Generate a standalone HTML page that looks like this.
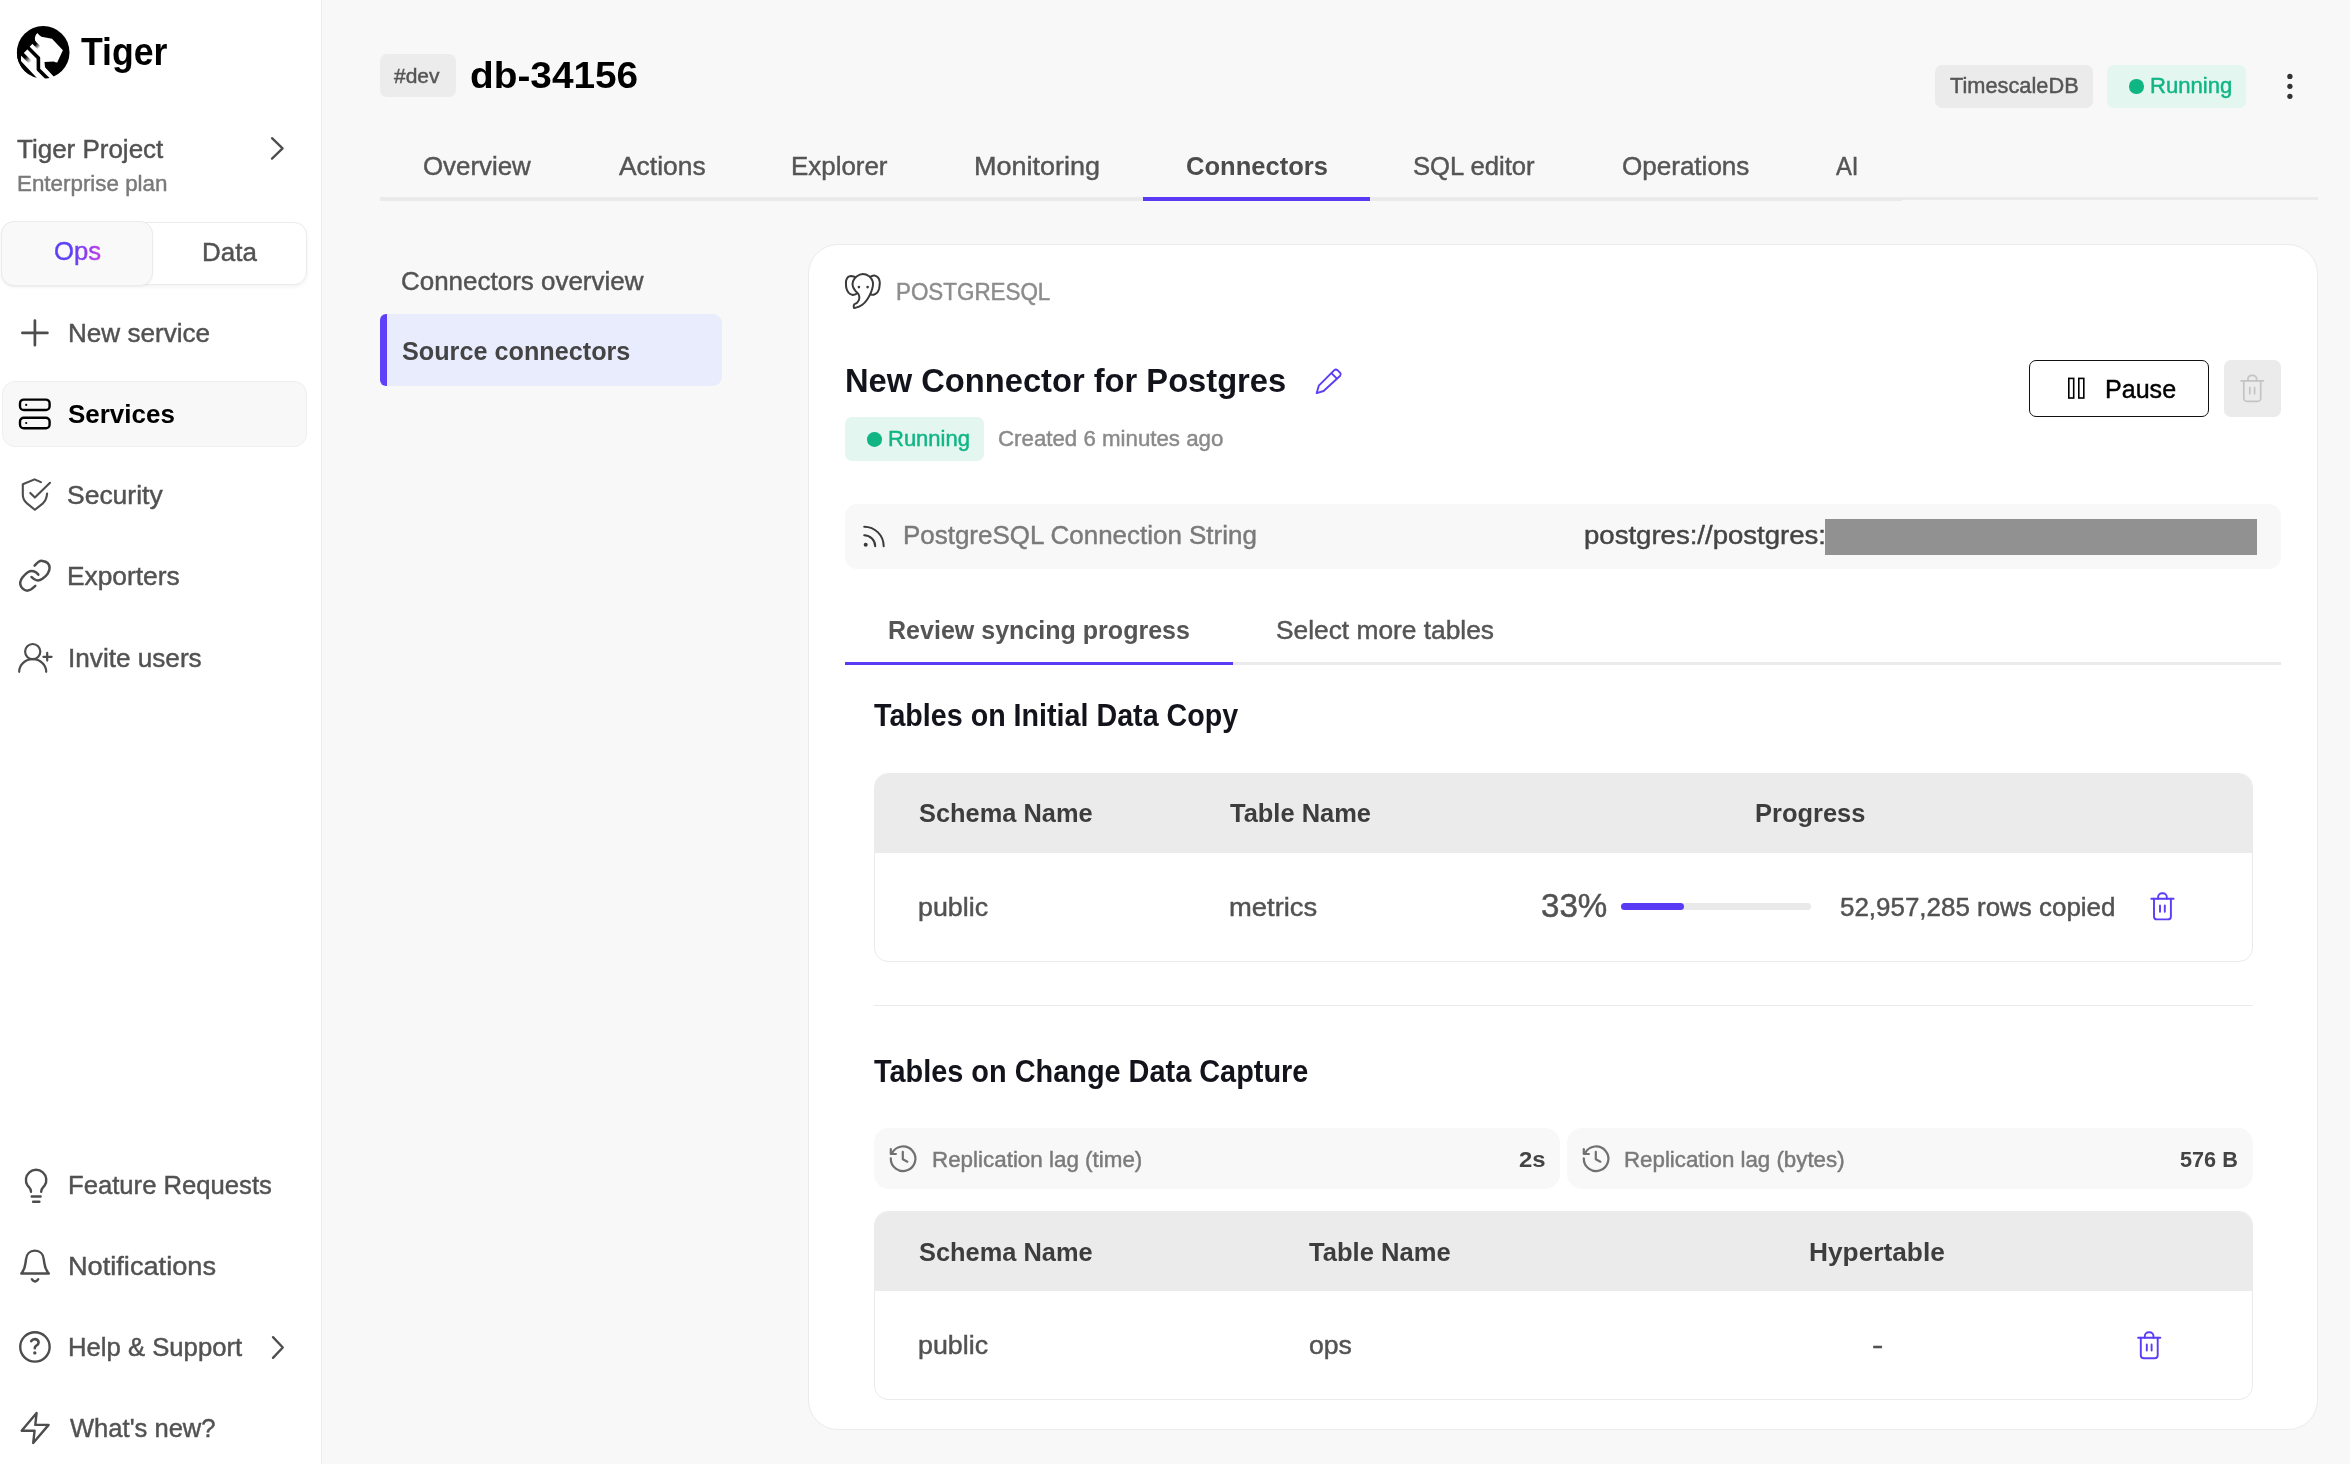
<!DOCTYPE html>
<html lang="en">
<head>
<meta charset="utf-8">
<title>db-34156 · Connectors · Tiger</title>
<style>
*{box-sizing:border-box;margin:0;padding:0}
html,body{width:2350px;height:1464px;overflow:hidden}
body{background:#f8f8f8;font-family:"Liberation Sans",sans-serif;position:relative;color:#4d4d4d}
.t{position:absolute;white-space:nowrap;display:block;font-style:normal;text-decoration:none;transform-origin:0 50%}
.b{position:absolute;display:block}
svg{position:absolute;overflow:visible}
.ic{fill:none;stroke-linecap:round;stroke-linejoin:round}
aside{position:absolute;left:0;top:0;width:322px;height:1464px;background:#fff;border-right:1px solid #ececec}
.toggle{left:2px;top:222px;width:305px;height:63px;border:1px solid #ebebeb;border-radius:13px;background:#fff;box-shadow:0 2px 4px rgba(0,0,0,.05)}
.toggle-on{left:1px;top:221px;width:152px;height:65px;border:1px solid #ebebeb;border-radius:13px;background:#f9f9f9;box-shadow:0 1px 2px rgba(0,0,0,.04)}
.nav-active{left:2px;top:381px;width:305px;height:66px;border:1px solid #efefef;border-radius:13px;background:#f8f8f8}
.chip{border-radius:7px}
.tabline{left:380px;top:197px;height:3px;width:1938px;background:#ebebeb}
.tabline2{left:380px;top:197px;height:4px;width:1522px;background:#eaeaea}
.tabsel{left:1143px;top:197px;height:4px;width:227px;background:#5b3af6}
.sn-active{left:380px;top:314px;width:342px;height:72px;background:#e8ecfd;border-radius:6px 9px 9px 6px;border-left:7px solid #6040f8}
.card{left:808px;top:244px;width:1510px;height:1186px;background:#fff;border:1px solid #ebebeb;border-radius:30px}
.btn{left:2029px;top:360px;width:180px;height:57px;border:1px solid #111;border-radius:7px;background:#fff}
.btn-dis{left:2224px;top:360px;width:57px;height:57px;border-radius:7px;background:#ebebeb}
.cs{left:845px;top:504px;width:1436px;height:65px;border-radius:12px;background:#f8f8f8}
.redact{left:1825px;top:519px;width:432px;height:36px;background:#919191}
.itline{left:845px;top:662px;width:1436px;height:3px;background:#ebebeb}
.itsel{left:845px;top:662px;width:388px;height:3px;background:#5b3af6}
.tbl{border:1px solid #ebebeb;border-radius:14px;background:#fff;overflow:hidden}
.tbl .hd{position:absolute;left:-1px;top:-1px;right:-1px;height:80px;background:#ebebeb}
.divider{left:874px;top:1005px;width:1379px;height:1px;background:#ebebeb}
.stat{height:61px;top:1128px;border-radius:15px;background:#f8f8f8}
.track{left:1621px;top:903px;width:190px;height:7px;border-radius:4px;background:#e9e9e9}
.fill{left:1621px;top:903px;width:63px;height:7px;border-radius:4px;background:#5b3af6}
</style>
</head>
<body>

<aside>
  <a class="brand">
    <svg style="left:0;top:0" width="90" height="90" viewBox="0 0 90 90">
      <defs>
        <linearGradient id="fa" gradientUnits="userSpaceOnUse" x1="22.5" y1="54.3" x2="30.5" y2="62.3"><stop offset="0.35" stop-color="#000"/><stop offset="1" stop-color="#000" stop-opacity="0"/></linearGradient>
        <linearGradient id="fb" gradientUnits="userSpaceOnUse" x1="34" y1="42.7" x2="39.3" y2="48"><stop offset="0.3" stop-color="#000"/><stop offset="1" stop-color="#000" stop-opacity="0"/></linearGradient>
        <clipPath id="cc"><circle cx="43.2" cy="52.4" r="26.3"/></clipPath>
      </defs>
      <circle cx="43.2" cy="52.4" r="26.3" fill="#000"/>
      <path fill="#fff" d="M37.3 32.9Q39.5 35.6 41.5 36.8L52 38.8L62.9 50.2L57.2 62.6Q55.5 62.3 53.7 61.5L44.5 62L45 67.2L56 79L34 82L20.9 61.1L21.1 55.8L24 52.8L26.8 50L30.1 46.2L32.5 43.8L35.8 41.9Q34.6 39.6 34.9 37.5Q35.5 34.5 37.3 32.900Z"/>
      <g clip-path="url(#cc)">
        <path fill="none" stroke="#000" stroke-width="3.6" stroke-linejoin="round" d="M24 43.6L38.4 58L38.4 69.4L50 81"/>
        <path fill="none" stroke="url(#fa)" stroke-width="3.9" d="M17 48.8L30.5 62.3"/>
        <path fill="none" stroke="url(#fb)" stroke-width="3.9" d="M30 38.7L39.3 48"/>
        <path fill="#000" d="M10 50L21 55.8L20.9 61.1L36.7 77.7L30 90L5 80Z"/>
      </g>
    </svg>
    <span class="t" id="logo" style="left:80.78px;top:28px;font-size:38.5px;line-height:48px;font-weight:700;color:#000;transform:scaleX(0.9248);">Tiger</span>
  </a>
  <div class="project">
    <span class="t" id="proj" style="left:17.40px;top:133px;font-size:26px;line-height:32px;-webkit-text-stroke:0.45px;color:#525252;transform:scaleX(0.9992);">Tiger Project</span>
    <span class="t" id="plan" style="left:17.00px;top:170px;font-size:22px;line-height:28px;-webkit-text-stroke:0.45px;color:#7a7a7a;transform:scaleX(1.0169);">Enterprise plan</span>
    <svg class="ic" style="left:262px;top:130px;stroke:#4d4d4d;stroke-width:2.3" width="32" height="36" viewBox="262 130 32 36"><path d="M272 138.2L282.6 148.4L272 158.6"/></svg>
  </div>
  <div class="b toggle"></div>
  <div class="b toggle-on"></div>
  <span class="t" id="ops" style="left:53.60px;top:235px;font-size:26px;line-height:32px;-webkit-text-stroke:0.45px;color:#5b3df5;transform:scaleX(0.9865);background:linear-gradient(90deg,#5a3ff6 35%,#c23ae6 100%);-webkit-background-clip:text;background-clip:text;color:transparent;">Ops</span>
  <span class="t" id="data" style="left:202.00px;top:236px;font-size:26px;line-height:32px;-webkit-text-stroke:0.45px;color:#525252;transform:scaleX(0.9981);">Data</span>
  <nav>
    <svg class="ic" style="left:18px;top:316px;stroke:#4d4d4d;stroke-width:2.7" width="34" height="34" viewBox="18 316 34 34"><path d="M22.4 332.9H47.4M34.9 320.6V345.2"/></svg>
    <span class="t" id="n1" style="left:67.80px;top:317px;font-size:26px;line-height:32px;-webkit-text-stroke:0.45px;color:#525252;transform:scaleX(1.0032);">New service</span>
    <div class="b nav-active"></div>
    <svg class="ic" style="left:16px;top:395px;stroke:#000;stroke-width:2.4" width="38" height="38" viewBox="16 395 38 38"><rect x="20" y="399.6" width="29.6" height="10.4" rx="3.8"/><rect x="20" y="417.7" width="29.6" height="10.6" rx="3.8"/><circle cx="26.2" cy="404.9" r="1.1" fill="#000" stroke="none"/><circle cx="26.2" cy="423" r="1.1" fill="#000" stroke="none"/></svg>
    <span class="t" id="n2" style="left:67.98px;top:398px;font-size:26px;line-height:32px;font-weight:700;color:#000;transform:scaleX(0.9987);">Services</span>
    <svg class="ic" style="left:18px;top:476px;stroke:#4d4d4d;stroke-width:2.1" width="36" height="38" viewBox="18 476 36 38"><path d="M40.9 482.1L34.6 479.4L22.8 484.2V494.5C22.8 498.5 24.2 501 27 503.4L34.9 509.8L42.6 503.6C45.3 501.2 46.7 498.2 47.1 493.6"/><path d="M30.3 492.9L34.9 497.6L50 482.8"/></svg>
    <span class="t" id="n3" style="left:67.34px;top:479px;font-size:26px;line-height:32px;-webkit-text-stroke:0.45px;color:#525252;transform:scaleX(1.0183);">Security</span>
    <svg class="ic" style="left:16px;top:557px;stroke:#4d4d4d;stroke-width:2.5" width="38" height="38" viewBox="16 557 38 38"><path d="M34.6 565.7C35.2 565.1 37 562.8 38.3 562C39.6 561.2 40.8 560.7 42.4 560.9C44 561.1 46.4 561.8 47.6 563C48.8 564.2 49.6 566.3 49.6 568.1C49.6 569.9 48.8 572.1 47.6 573.9C46.4 575.7 44 577.6 42.4 578.7C40.8 579.8 39.4 580.4 38 580.4C36.6 580.4 35 579.6 33.9 579C32.8 578.4 31.9 577.3 31.5 577"/><path d="M38.3 574.6C37.8 574.2 36.7 572.8 35.6 572.2C34.5 571.6 33.2 571 31.9 571C30.6 571 29.4 571.2 27.8 572.2C26.2 573.2 23.9 575.6 22.6 577.3C21.3 579 20.4 580.8 20.2 582.4C20 584 20.6 585.6 21.3 586.9C22.1 588.2 23.6 589.4 24.7 590C25.8 590.6 26.7 590.7 27.8 590.6C28.9 590.5 29.9 590.1 31.2 589.3C32.4 588.5 34.6 586.5 35.3 585.9"/></svg>
    <span class="t" id="n4" style="left:66.67px;top:560px;font-size:26px;line-height:32px;-webkit-text-stroke:0.45px;color:#525252;transform:scaleX(1.0125);">Exporters</span>
    <svg class="ic" style="left:16px;top:640px;stroke:#4d4d4d;stroke-width:2.2" width="40" height="36" viewBox="16 640 40 36"><circle cx="32.7" cy="651.6" r="7.6"/><path d="M19.2 671.8A13.5 12.6 0 0 1 46.2 671.8"/><path d="M43.4 656.8H51.6M47.2 652.9V660.6"/></svg>
    <span class="t" id="n5" style="left:67.58px;top:642px;font-size:26px;line-height:32px;-webkit-text-stroke:0.45px;color:#525252;transform:scaleX(1.0056);">Invite users</span>
    <svg class="ic" style="left:20px;top:1165px;stroke:#4d4d4d;stroke-width:2.4" width="32" height="40" viewBox="20 1165 32 40"><path d="M31 1191.8C31 1189.5 30.3 1188.3 28.8 1186.8L27.6 1185.6A10.2 10.2 0 1 1 44.6 1185.6L43.4 1186.8C41.9 1188.3 41.2 1189.5 41.2 1191.8"/><path d="M31.7 1196.5H40.6M33.1 1201.7H39.4"/></svg>
    <span class="t" id="n6" style="left:67.82px;top:1169px;font-size:26px;line-height:32px;-webkit-text-stroke:0.45px;color:#525252;transform:scaleX(0.9866);">Feature Requests</span>
    <svg class="ic" style="left:18px;top:1247px;stroke:#4d4d4d;stroke-width:2.4" width="36" height="38" viewBox="18 1247 36 38"><path d="M21.3 1273.5C23.8 1270.5 25 1267.5 25.5 1263L26 1259.5C26.3 1254 30 1250.6 34.9 1250.6S43.5 1254 43.8 1259.5L44.3 1263C44.8 1267.5 46.3 1270.5 48.8 1273.5Z"/><path d="M31.9 1279.3Q35.05 1283.7 38.2 1279.3"/></svg>
    <span class="t" id="n7" style="left:67.56px;top:1250px;font-size:26px;line-height:32px;-webkit-text-stroke:0.45px;color:#525252;transform:scaleX(1.0448);">Notifications</span>
    <svg class="ic" style="left:17px;top:1329px;stroke:#4d4d4d;stroke-width:2.4" width="36" height="36" viewBox="17 1329 36 36"><circle cx="34.93" cy="1346.9" r="14.7"/><path d="M31.2 1341.1C32 1339.7 33.3 1339.1 34.9 1339.1C37 1339.1 38.6 1340.5 38.6 1342.4C38.6 1344.5 37 1345.3 35.8 1346C35 1346.5 34.8 1347 34.8 1348.3" stroke-width="2.6"/><circle cx="34.8" cy="1352.9" r="1.7" fill="#4d4d4d" stroke="none"/></svg>
    <span class="t" id="n8" style="left:67.82px;top:1331px;font-size:26px;line-height:32px;-webkit-text-stroke:0.45px;color:#525252;transform:scaleX(0.9876);">Help &amp; Support</span>
    <svg class="ic" style="left:262px;top:1328px;stroke:#4d4d4d;stroke-width:2.3" width="32" height="38" viewBox="262 1328 32 38"><path d="M273 1337.1L282.8 1347.5L273 1357.9"/></svg>
    <svg class="ic" style="left:18px;top:1409px;stroke:#4d4d4d;stroke-width:2.4" width="36" height="38" viewBox="18 1409 36 38"><path d="M36.6 1412.9L21.6 1430.7H34.6L33.2 1443L48.6 1424.9H35.3Z"/></svg>
    <span class="t" id="n9" style="left:69.65px;top:1412px;font-size:26px;line-height:32px;-webkit-text-stroke:0.45px;color:#525252;transform:scaleX(0.9830);">What's new?</span>
  </nav>
</aside>

<header>
  <div class="b chip" style="left:380px;top:54px;width:76px;height:43px;background:#ececec"></div>
  <span class="t" id="dev" style="left:394.28px;top:63px;font-size:20.5px;line-height:26px;-webkit-text-stroke:0.45px;color:#555;transform:scaleX(1.0234);">#dev</span>
  <span class="t" id="db" style="left:469.89px;top:53px;font-size:36.5px;line-height:46px;font-weight:700;color:#000;transform:scaleX(1.0628);">db-34156</span>
  <div class="b chip" style="left:1935px;top:65px;width:158px;height:43px;background:#ebebeb"></div>
  <span class="t" id="tsdb" style="left:1949.56px;top:73px;font-size:21.5px;line-height:27px;-webkit-text-stroke:0.45px;color:#555;transform:scaleX(1.0129);">TimescaleDB</span>
  <div class="b chip" style="left:2107px;top:65px;width:139px;height:43px;background:#e3f6f0"></div>
  <div class="b" style="left:2129px;top:79px;width:14.5px;height:14.5px;border-radius:50%;background:#10b584"></div>
  <span class="t" id="run1" style="left:2150.39px;top:73px;font-size:21.5px;line-height:27px;-webkit-text-stroke:0.45px;color:#10b584;transform:scaleX(1.0270);">Running</span>
  <svg style="left:2280px;top:66px" width="20" height="40" viewBox="2280 66 20 40"><circle cx="2289.9" cy="76.4" r="2.65" fill="#333"/><circle cx="2289.9" cy="86.3" r="2.65" fill="#333"/><circle cx="2289.9" cy="96.3" r="2.65" fill="#333"/></svg>
  <nav class="tabs">
    <div class="b tabline"></div><div class="b tabline2"></div><div class="b tabsel"></div>
    <span class="t" id="tab0" style="left:422.81px;top:150px;font-size:26px;line-height:32px;-webkit-text-stroke:0.45px;color:#555;transform:scaleX(0.9943);">Overview</span><span class="t" id="tab1" style="left:618.63px;top:150px;font-size:26px;line-height:32px;-webkit-text-stroke:0.45px;color:#555;transform:scaleX(1.0161);">Actions</span><span class="t" id="tab2" style="left:791.00px;top:150px;font-size:26px;line-height:32px;-webkit-text-stroke:0.45px;color:#555;transform:scaleX(0.9968);">Explorer</span><span class="t" id="tab3" style="left:974.12px;top:150px;font-size:26px;line-height:32px;-webkit-text-stroke:0.45px;color:#555;transform:scaleX(1.0369);">Monitoring</span><span class="t" id="tab4" style="left:1185.75px;top:150px;font-size:26px;line-height:32px;font-weight:700;color:#4c4c4c;transform:scaleX(0.9821);">Connectors</span><span class="t" id="tab5" style="left:1413.18px;top:150px;font-size:26px;line-height:32px;-webkit-text-stroke:0.45px;color:#555;transform:scaleX(0.9865);">SQL editor</span><span class="t" id="tab6" style="left:1621.56px;top:150px;font-size:26px;line-height:32px;-webkit-text-stroke:0.45px;color:#555;transform:scaleX(1.0015);">Operations</span><span class="t" id="tab7" style="left:1836.19px;top:150px;font-size:26px;line-height:32px;-webkit-text-stroke:0.45px;color:#555;transform:scaleX(0.9150);">AI</span>
  </nav>
</header>

<nav class="subnav">
  <span class="t" id="sn1" style="left:401.45px;top:265px;font-size:26px;line-height:32px;-webkit-text-stroke:0.45px;color:#525252;transform:scaleX(0.9985);">Connectors overview</span>
  <div class="b sn-active"></div>
  <span class="t" id="sn2" style="left:402.00px;top:335px;font-size:26.5px;line-height:33px;font-weight:700;color:#444;transform:scaleX(0.9514);">Source connectors</span>
</nav>

<main>
  <div class="b card"></div>
  <section class="connector-head">
    <svg class="ic" style="left:842px;top:270px;stroke:#3a3a3a;stroke-width:2.0" width="42" height="42" viewBox="842 270 42 42"><path d="M862.8 274C860.8 274 858.5 275.1 856.9 276.3C855.2 277.5 853.8 279.4 853.1 281.1C852.4 282.8 852.5 284.9 852.9 286.6C853.3 288.2 854.6 289.7 855.5 291C856.4 292.3 857.9 293.1 858.6 294.4C859.2 295.8 859.5 297.5 859.2 298.9C859 300.3 858 301.7 857.2 302.6C856.4 303.6 854.9 303.6 854.3 304.3C853.7 305.1 853.6 306.5 853.8 307.1C853.9 307.7 853.7 308.3 855.2 307.9C856.6 307.5 860.3 306.1 862.3 304.7C864.4 303.2 866 301.2 867.4 299.2C868.9 297.2 869.9 295 870.9 292.7C871.8 290.5 872.6 287.8 872.9 285.9C873.2 284 873.2 282.7 872.6 281.1C871.9 279.5 870.8 277.5 869.2 276.3C867.5 275.1 864.9 274 862.8 274Z"/><path d="M855.2 277C854.5 276.8 852.3 275.9 851.1 275.9C849.8 276 848.6 276.4 847.8 277.2C847 278 846.4 279.6 846.1 280.8C845.8 282 846 282.9 846 284.2C846 285.5 846 286.9 846.4 288.3C846.8 289.7 847.5 291.5 848.5 292.6C849.4 293.6 850.9 294.5 852.1 294.8C853.2 295.1 854.6 294.6 855.5 294.3C856.3 294 856.9 293.3 857.2 293.1"/><path d="M870.2 276.7C870.9 276.5 873 275.5 874.3 275.6C875.6 275.7 877.1 276.6 878 277.5C878.9 278.5 879.5 280.2 879.7 281.5C880 282.7 879.7 284 879.6 285.2C879.5 286.5 879.4 287.7 879 289C878.6 290.2 878 291.8 877.1 292.7C876.2 293.7 874.7 294.5 873.6 294.8C872.5 295.1 871 294.5 870.5 294.4"/><circle cx="858.9" cy="287.1" r="1.3" fill="#3a3a3a" stroke="none"/><circle cx="867.6" cy="287.1" r="1.3" fill="#3a3a3a" stroke="none"/></svg>
    <span class="t" id="pg" style="left:895.82px;top:278px;font-size:23.5px;line-height:29px;-webkit-text-stroke:0.45px;color:#8c8c8c;transform:scaleX(0.9529);">POSTGRESQL</span>
    <span class="t" id="title" style="left:844.57px;top:360px;font-size:33px;line-height:41px;font-weight:700;color:#13131c;transform:scaleX(0.9901);">New Connector for Postgres</span>
    <svg class="ic" style="left:1312px;top:364px;stroke:#5a3df5;stroke-width:1.9" width="34" height="34" viewBox="1312 364 34 34"><path d="M1316.7 393.1L1318.8 385.7L1334.3 370.2Q1335.9 368.8 1337.5 370.2L1340.2 372.9Q1341.4 374.3 1340.2 375.7L1323.6 391Z"/><path d="M1331.9 373.6L1336.4 378.2"/></svg>
    <div class="b chip" style="left:845px;top:417px;width:139px;height:44px;background:#e3f6f0"></div>
    <div class="b" style="left:867px;top:432.1px;width:14.6px;height:14.6px;border-radius:50%;background:#10b584"></div>
    <span class="t" id="run2" style="left:888.19px;top:426px;font-size:21.5px;line-height:27px;-webkit-text-stroke:0.45px;color:#10b584;transform:scaleX(1.0233);">Running</span>
    <span class="t" id="created" style="left:998.43px;top:425px;font-size:22px;line-height:28px;-webkit-text-stroke:0.45px;color:#8a8a8a;transform:scaleX(1.0125);">Created 6 minutes ago</span>
    <div class="b btn"></div>
    <svg style="left:2064px;top:374px" width="26" height="30" viewBox="2064 374 26 30"><rect x="2068.8" y="378.4" width="4.9" height="19.6" fill="none" stroke="#000" stroke-width="1.6"/><rect x="2078.8" y="378.4" width="5" height="19.6" fill="none" stroke="#000" stroke-width="1.6"/></svg>
    <span class="t" id="pause" style="left:2105.42px;top:373px;font-size:26px;line-height:32px;-webkit-text-stroke:0.45px;color:#000;transform:scaleX(0.9642);">Pause</span>
    <div class="b btn-dis"></div>
    <svg class="ic" style="left:2235px;top:370px;stroke:#c4c4c4;stroke-width:1.7" width="34" height="36" viewBox="2235 370 34 36"><path d="M2241.1 380.8H2263.4"/><path d="M2247.9 380.8V379.3a4 4 0 0 1 4-4h.7a4 4 0 0 1 4 4V380.8"/><path d="M2243.8 380.8V398.4a3 3 0 0 0 3 3H2257.7a3 3 0 0 0 3-3V380.8"/><path d="M2249.8 387.5V393.7M2254.6 387.5V393.7"/></svg>
  </section>
  <section class="connstr">
    <div class="b cs"></div>
    <svg class="ic" style="left:858px;top:520px;stroke:#3a3a3a;stroke-width:2.0" width="32" height="32" viewBox="858 520 32 32"><path d="M864.2 526.7A19.5 19.5 0 0 1 883.7 546.2"/><path d="M864.2 535.2A11 11 0 0 1 875.2 546.2"/><circle cx="865.7" cy="544.8" r="2" fill="#3a3a3a" stroke="none"/></svg>
    <span class="t" id="cslabel" style="left:903.00px;top:519px;font-size:26px;line-height:32px;-webkit-text-stroke:0.45px;color:#7a7a7a;transform:scaleX(0.9979);">PostgreSQL Connection String</span>
    <span class="t" id="csval" style="left:1583.55px;top:519px;font-size:26px;line-height:32px;-webkit-text-stroke:0.45px;color:#444;transform:scaleX(1.0596);">postgres://postgres:</span>
    <div class="b redact"></div>
  </section>
  <nav class="innertabs">
    <div class="b itline"></div><div class="b itsel"></div>
    <span class="t" id="it1" style="left:888.26px;top:615px;font-size:25px;line-height:31px;font-weight:700;color:#555;transform:scaleX(1.0015);">Review syncing progress</span><span class="t" id="it2" style="left:1275.97px;top:615px;font-size:25px;line-height:31px;-webkit-text-stroke:0.45px;color:#555;transform:scaleX(1.0530);">Select more tables</span>
  </nav>
  <section class="initial-copy">
    <span class="t" id="h1" style="left:873.92px;top:696px;font-size:30.5px;line-height:38px;font-weight:700;color:#13131c;transform:scaleX(0.9398);">Tables on Initial Data Copy</span>
    <div class="b tbl" style="left:874px;top:773px;width:1379px;height:189px"><div class="hd"></div></div>
    <span class="t" id="th1a" style="left:919.22px;top:797px;font-size:26px;line-height:32px;font-weight:700;color:#3d3d3d;transform:scaleX(0.9765);">Schema Name</span><span class="t" id="th1b" style="left:1229.72px;top:797px;font-size:26px;line-height:32px;font-weight:700;color:#3d3d3d;transform:scaleX(0.9788);">Table Name</span><span class="t" id="th1c" style="left:1754.70px;top:797px;font-size:26px;line-height:32px;font-weight:700;color:#3d3d3d;transform:scaleX(0.9789);">Progress</span>
    <span class="t" id="td1a" style="left:918.40px;top:891px;font-size:25.5px;line-height:32px;-webkit-text-stroke:0.45px;color:#525252;transform:scaleX(1.0513);">public</span><span class="t" id="td1b" style="left:1228.96px;top:891px;font-size:25.5px;line-height:32px;-webkit-text-stroke:0.45px;color:#525252;transform:scaleX(1.0736);">metrics</span><span class="t" id="pct" style="left:1540.55px;top:885px;font-size:33px;line-height:41px;-webkit-text-stroke:0.45px;color:#525252;transform:scaleX(1.0046);">33%</span>
    <div class="b track"></div><div class="b fill"></div>
    <span class="t" id="rows" style="left:1840.36px;top:891px;font-size:25.5px;line-height:32px;-webkit-text-stroke:0.45px;color:#525252;transform:scaleX(1.0172);">52,957,285 rows copied</span>
    <svg class="ic" style="left:2146px;top:888px;stroke:#5a3df5;stroke-width:1.9" width="34" height="36" viewBox="2146 888 34 36"><path d="M2151.3 898.8H2173.6"/><path d="M2158.1 898.8V897.3a4 4 0 0 1 4-4h.7a4 4 0 0 1 4 4V898.8"/><path d="M2154 898.8V916.4a3 3 0 0 0 3 3H2167.9a3 3 0 0 0 3-3V898.8"/><path d="M2160 905.5V911.7M2164.8 905.5V911.7"/></svg>
  </section>
  <div class="b divider"></div>
  <section class="cdc">
    <span class="t" id="h2" style="left:873.92px;top:1052px;font-size:30.5px;line-height:38px;font-weight:700;color:#13131c;transform:scaleX(0.9469);">Tables on Change Data Capture</span>
    <div class="b stat" style="left:874px;width:686px"></div>
    <div class="b stat" style="left:1567px;width:686px"></div>
    <svg class="ic" style="left:886px;top:1142px;stroke:#707070;stroke-width:2.2" width="34" height="34" viewBox="886 1142 34 34"><path d="M892.2 1153A12.3 12.3 0 1 1 890.8 1158.3"/><path d="M890.8 1149V1154H895.9"/><path d="M902.8 1151.8V1159.3L907.4 1161.7"/></svg>
    <span class="t" id="rl1" style="left:931.61px;top:1146px;font-size:22px;line-height:28px;-webkit-text-stroke:0.45px;color:#7a7a7a;transform:scaleX(1.0177);">Replication lag (time)</span><span class="t" id="rv1" style="left:1519.15px;top:1146px;font-size:22px;line-height:28px;font-weight:700;color:#444;transform:scaleX(1.0856);">2s</span>
    <svg class="ic" style="left:1579px;top:1142px;stroke:#707070;stroke-width:2.2" width="34" height="34" viewBox="1579 1142 34 34"><path d="M1585.2 1153A12.3 12.3 0 1 1 1583.8 1158.3"/><path d="M1583.8 1149V1154H1588.9"/><path d="M1595.8 1151.8V1159.3L1600.4 1161.7"/></svg>
    <span class="t" id="rl2" style="left:1624.14px;top:1146px;font-size:22px;line-height:28px;-webkit-text-stroke:0.45px;color:#7a7a7a;transform:scaleX(1.0134);">Replication lag (bytes)</span><span class="t" id="rv2" style="left:2180.18px;top:1146px;font-size:22px;line-height:28px;font-weight:700;color:#444;transform:scaleX(0.9840);">576 B</span>
    <div class="b tbl" style="left:874px;top:1211px;width:1379px;height:189px"><div class="hd"></div></div>
    <span class="t" id="th2a" style="left:919.22px;top:1236px;font-size:26px;line-height:32px;font-weight:700;color:#3d3d3d;transform:scaleX(0.9765);">Schema Name</span><span class="t" id="th2b" style="left:1308.72px;top:1236px;font-size:26px;line-height:32px;font-weight:700;color:#3d3d3d;transform:scaleX(0.9832);">Table Name</span><span class="t" id="th2c" style="left:1808.62px;top:1236px;font-size:26px;line-height:32px;font-weight:700;color:#3d3d3d;transform:scaleX(1.0105);">Hypertable</span>
    <span class="t" id="td2a" style="left:918.40px;top:1329px;font-size:25.5px;line-height:32px;-webkit-text-stroke:0.45px;color:#525252;transform:scaleX(1.0513);">public</span><span class="t" id="td2b" style="left:1308.80px;top:1329px;font-size:25.5px;line-height:32px;-webkit-text-stroke:0.45px;color:#525252;transform:scaleX(1.0435);">ops</span><span class="t" id="td2c" style="left:1871.59px;top:1329px;font-size:25.5px;line-height:32px;-webkit-text-stroke:0.45px;color:#525252;transform:scaleX(1.3296);">-</span>
    <svg class="ic" style="left:2132px;top:1326px;stroke:#5a3df5;stroke-width:1.9" width="34" height="36" viewBox="2132 1326 34 36"><path d="M2138.1 1337.7H2160.3"/><path d="M2144.8 1337.7V1336.2a4 4 0 0 1 4-4h.7a4 4 0 0 1 4 4V1337.7"/><path d="M2140.8 1337.7V1355.3a3 3 0 0 0 3 3H2154.7a3 3 0 0 0 3-3V1337.7"/><path d="M2146.8 1344.4V1350.6M2151.6 1344.4V1350.6"/></svg>
  </section>
</main>
</body>
</html>
